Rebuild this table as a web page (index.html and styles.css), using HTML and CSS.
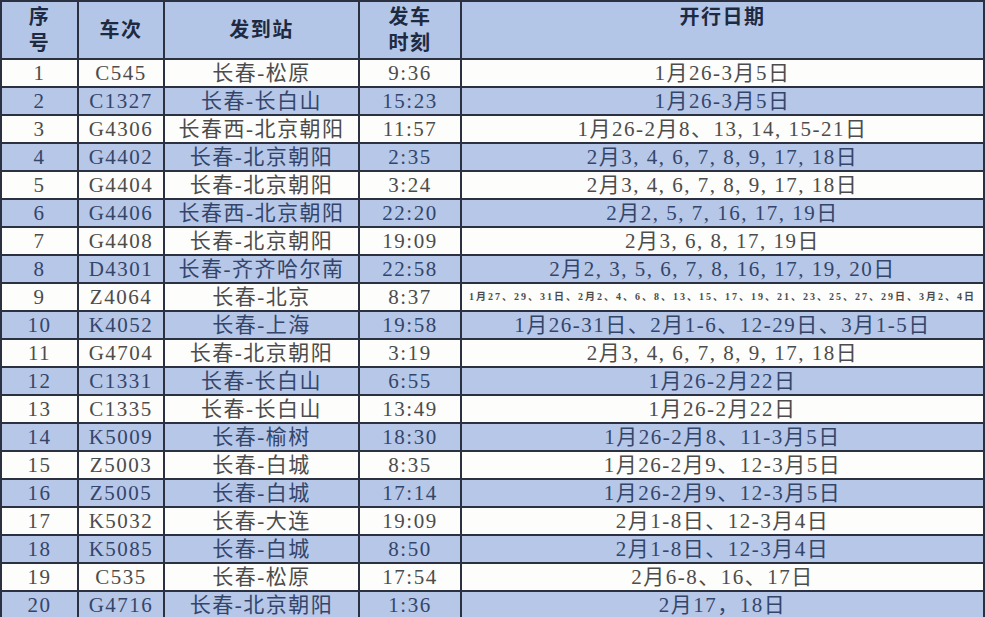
FILE: index.html
```html
<!DOCTYPE html>
<html lang="zh">
<head>
<meta charset="utf-8">
<link rel="stylesheet" href="styles.css">
</head>
<body>
<table class="tt">
  <colgroup>
    <col class="c1"><col class="c2"><col class="c3"><col class="c4"><col class="c5">
  </colgroup>
  <thead>
    <tr>
      <th>序<br>号</th>
      <th>车次</th>
      <th>发到站</th>
      <th>发车<br>时刻</th>
      <th class="top">开行日期</th>
    </tr>
  </thead>
  <tbody>
    <tr><td>1</td><td>C545</td><td>长春-松原</td><td>9:36</td><td>1月26-3月5日</td></tr>
    <tr><td>2</td><td>C1327</td><td>长春-长白山</td><td>15:23</td><td>1月26-3月5日</td></tr>
    <tr><td>3</td><td>G4306</td><td>长春西-北京朝阳</td><td>11:57</td><td>1月26-2月8、13, 14, 15-21日</td></tr>
    <tr><td>4</td><td>G4402</td><td>长春-北京朝阳</td><td>2:35</td><td>2月3, 4, 6, 7, 8, 9, 17, 18日</td></tr>
    <tr><td>5</td><td>G4404</td><td>长春-北京朝阳</td><td>3:24</td><td>2月3, 4, 6, 7, 8, 9, 17, 18日</td></tr>
    <tr><td>6</td><td>G4406</td><td>长春西-北京朝阳</td><td>22:20</td><td>2月2, 5, 7, 16, 17, 19日</td></tr>
    <tr><td>7</td><td>G4408</td><td>长春-北京朝阳</td><td>19:09</td><td>2月3, 6, 8, 17, 19日</td></tr>
    <tr><td>8</td><td>D4301</td><td>长春-齐齐哈尔南</td><td>22:58</td><td>2月2, 3, 5, 6, 7, 8, 16, 17, 19, 20日</td></tr>
    <tr><td>9</td><td>Z4064</td><td>长春-北京</td><td>8:37</td><td class="tiny">1月27、29、31日、2月2、4、6、8、13、15、17、19、21、23、25、27、29日、3月2、4日</td></tr>
    <tr><td>10</td><td>K4052</td><td>长春-上海</td><td>19:58</td><td>1月26-31日、2月1-6、12-29日、3月1-5日</td></tr>
    <tr><td>11</td><td>G4704</td><td>长春-北京朝阳</td><td>3:19</td><td>2月3, 4, 6, 7, 8, 9, 17, 18日</td></tr>
    <tr><td>12</td><td>C1331</td><td>长春-长白山</td><td>6:55</td><td>1月26-2月22日</td></tr>
    <tr><td>13</td><td>C1335</td><td>长春-长白山</td><td>13:49</td><td>1月26-2月22日</td></tr>
    <tr><td>14</td><td>K5009</td><td>长春-榆树</td><td>18:30</td><td>1月26-2月8、11-3月5日</td></tr>
    <tr><td>15</td><td>Z5003</td><td>长春-白城</td><td>8:35</td><td>1月26-2月9、12-3月5日</td></tr>
    <tr><td>16</td><td>Z5005</td><td>长春-白城</td><td>17:14</td><td>1月26-2月9、12-3月5日</td></tr>
    <tr><td>17</td><td>K5032</td><td>长春-大连</td><td>19:09</td><td>2月1-8日、12-3月4日</td></tr>
    <tr><td>18</td><td>K5085</td><td>长春-白城</td><td>8:50</td><td>2月1-8日、12-3月4日</td></tr>
    <tr><td>19</td><td>C535</td><td>长春-松原</td><td>17:54</td><td>2月6-8、16、17日</td></tr>
    <tr><td>20</td><td>G4716</td><td>长春-北京朝阳</td><td>1:36</td><td>2月17，18日</td></tr>
  </tbody>
</table>
</body>
</html>
```
FILE: styles.css
```css
html, body {
  margin: 0;
  padding: 0;
  background: #ffffff;
}
.tt {
  border-collapse: collapse;
  table-layout: fixed;
  width: 983px;
  font-family: "Liberation Serif", "Noto Sans CJK SC", serif;
  font-size: 21px;
  letter-spacing: 1.5px;
}
.c1 { width: 77px; }
.c2 { width: 86px; }
.c3 { width: 195px; }
.c4 { width: 102px; }
.c5 { width: 523px; }
.tt th, .tt td {
  border: 2px solid #2b3140;
  text-align: center;
  padding: 0;
  white-space: nowrap;
  overflow: hidden;
}
.tt th {
  height: 54px;
  background: #b4c6e7;
  color: #1e2a42;
  font-weight: bold;
  font-size: 20px;
  line-height: 26px;
  vertical-align: middle;
}
.tt th.top {
  vertical-align: top;
  padding-top: 2px;
}
.tt td {
  height: 26px;
  line-height: 26px;
  color: #4c4c4c;
  background: #fdfdfb;
}
.tt tbody tr:nth-child(even) td {
  background: #b6c7e8;
  color: #34456a;
}
.tt td.tiny {
  font-size: 10px;
  letter-spacing: 2px;
  font-weight: bold;
}
```
